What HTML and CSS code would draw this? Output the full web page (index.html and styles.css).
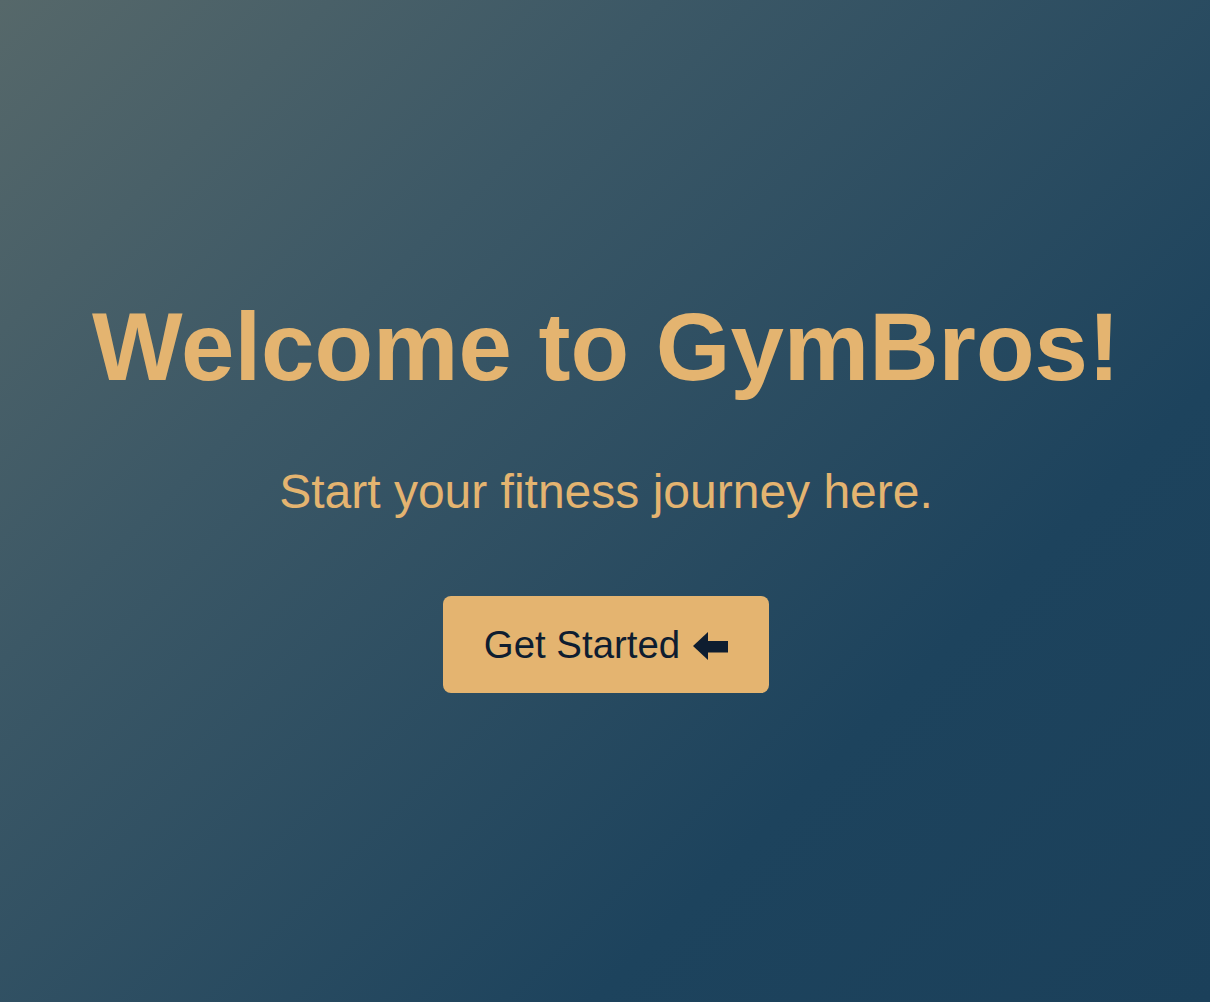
FILE: index.html
```html
<!DOCTYPE html>
<html lang="en">
<head>
<meta charset="utf-8">
<title>GymBros</title>
<link rel="stylesheet" href="styles.css">
</head>
<body>
<main class="hero">
  <h1 class="hero-title">Welcome to GymBros!</h1>
  <p class="hero-sub">Start your fitness journey here.</p>
  <button class="cta" type="button">
    <span class="cta-label">Get Started</span>
    <svg class="cta-icon" viewBox="0 0 35 28" width="35" height="28" aria-hidden="true">
      <polygon points="0,14 15,0 15,28" fill="currentColor"/>
      <rect x="14" y="9" width="21" height="11.5" fill="currentColor"/>
    </svg>
  </button>
</main>
</body>
</html>
```

FILE: styles.css
```css
html, body {
  margin: 0;
  padding: 0;
  height: 100%;
}

body {
  font-family: "Liberation Sans", Arial, sans-serif;
  background: linear-gradient(135deg, #56686a 0%, #3c5866 30%, #1d435d 72%, #1b405a 100%);
  color: #e4b470;
}

.hero {
  min-height: 100vh;
  box-sizing: border-box;
  display: flex;
  flex-direction: column;
  align-items: center;
  justify-content: center;
  padding: 0 0 17px 2px;
  text-align: center;
}

.hero-title {
  margin: 0 0 62px;
  font-size: 96px;
  line-height: 110px;
  font-weight: 700;
  color: #e4b470;
}

.hero-sub {
  margin: 0 0 77px;
  font-size: 48px;
  line-height: 55px;
  color: #e4b470;
}

.cta {
  width: 326px;
  height: 97px;
  display: flex;
  align-items: center;
  justify-content: center;
  border: none;
  border-radius: 8px;
  background: #e4b470;
  color: #0e1d30;
  font-family: "Liberation Sans", Arial, sans-serif;
  font-size: 38.4px;
  padding: 2px 0 0;
  cursor: pointer;
}

.cta-label {
  line-height: 1;
}

.cta-icon {
  margin-left: 13px;
  flex: none;
}
```
